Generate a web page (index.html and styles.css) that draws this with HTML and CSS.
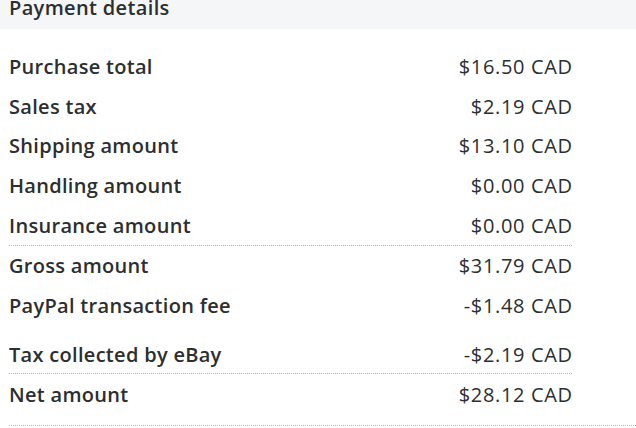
FILE: index.html
```html
<!DOCTYPE html>
<html>
<head>
<meta charset="utf-8">
<link rel="stylesheet" href="styles.css">
</head>
<body>
<div class="header"><h2 class="title">Payment details</h2></div>
<div class="details">
  <div class="group group-first">
    <div class="row"><span class="label">Purchase total</span><span class="value">$16.50 CAD</span></div>
    <div class="row"><span class="label">Sales tax</span><span class="value">$2.19 CAD</span></div>
    <div class="row"><span class="label">Shipping amount</span><span class="value">$13.10 CAD</span></div>
    <div class="row"><span class="label">Handling amount</span><span class="value">$0.00 CAD</span></div>
    <div class="row"><span class="label">Insurance amount</span><span class="value">$0.00 CAD</span></div>
  </div>
  <div class="group group-second">
    <div class="row"><span class="label">Gross amount</span><span class="value">$31.79 CAD</span></div>
    <div class="row"><span class="label">PayPal transaction fee</span><span class="value">-$1.48 CAD</span></div>
    <div class="row row-tax"><span class="label">Tax collected by eBay</span><span class="value">-$2.19 CAD</span></div>
  </div>
  <div class="group group-net">
    <div class="row row-net"><span class="label">Net amount</span><span class="value">$28.12 CAD</span></div>
  </div>
</div>
</body>
</html>
```

FILE: styles.css
```css
html, body {
  margin: 0;
  padding: 0;
  background: #ffffff;
}
body {
  font-family: "Open Sans", "Noto Sans", sans-serif;
  color: #2c2e2f;
  width: 636px;
  overflow: hidden;
}
.header {
  height: 29px;
  background: #f5f6f8;
  padding-left: 9px;
  overflow: hidden;
}
.title {
  margin: 0;
  font-size: 20px;
  line-height: 16px;
  font-weight: 600;
  letter-spacing: 0.35px;
}
.details {
  padding-top: 18px;
}
.group {
  width: 563px;
  margin-left: 9px;
}
.group-first,
.group-second {
  border-bottom: 1px dotted #b9b9b9;
}
.group-first .row {
  height: 39.6px;
}
.group-second .row {
  height: 40px;
}
.group-second .row-tax {
  height: 47px;
  align-items: flex-end;
  padding-bottom: 5px;
  box-sizing: border-box;
}
.group-net {
  width: 627px;
  padding-bottom: 9px;
  border-bottom: 1px dotted #b9b9b9;
}
.group-net .row {
  width: 563px;
  height: 42px;
}
.row {
  display: flex;
  justify-content: space-between;
  align-items: center;
  font-size: 20px;
}
.label {
  font-weight: 600;
  letter-spacing: 0.3px;
}
.value {
  font-weight: 400;
  letter-spacing: 0.65px;
  margin-right: -0.65px;
}
```
